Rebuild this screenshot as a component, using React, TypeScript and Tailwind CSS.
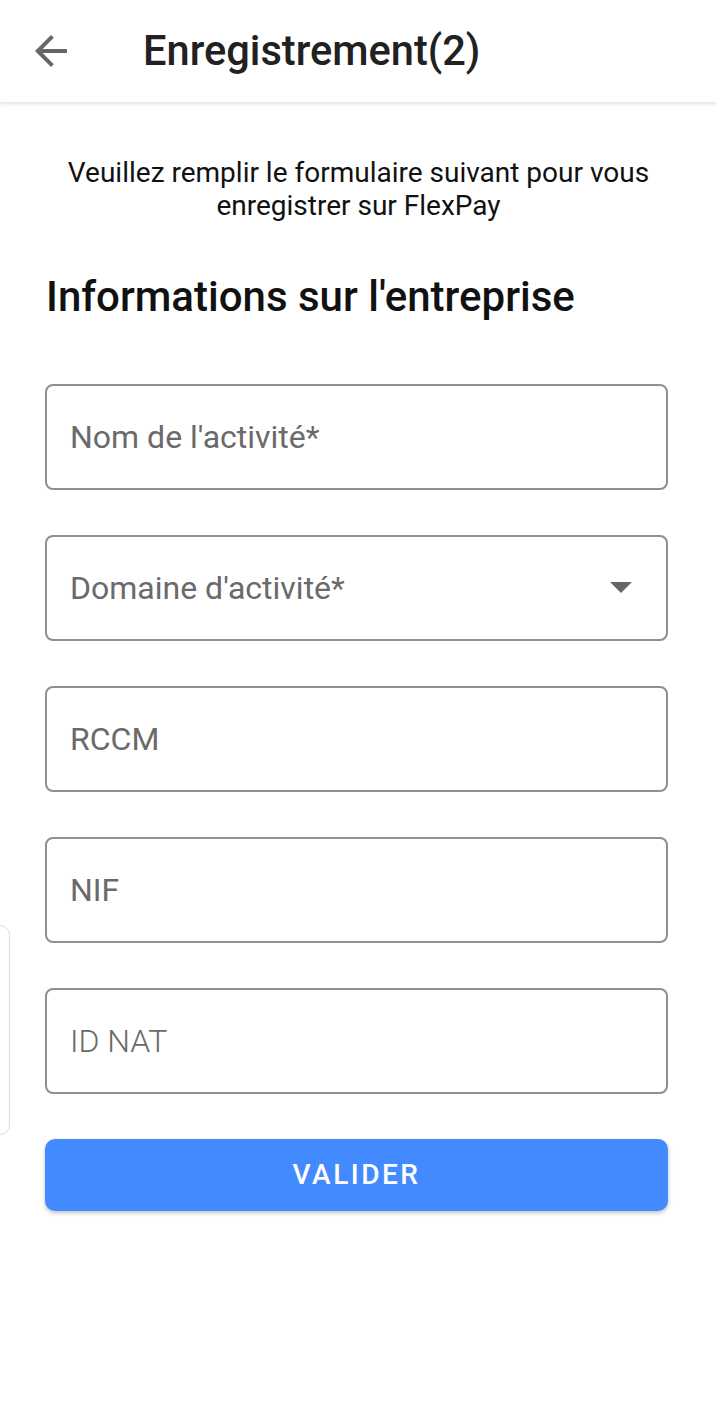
import React from "react";

const fields = [
  { label: "Nom de l'activité*", select: false },
  { label: "Domaine d'activité*", select: true },
  { label: "RCCM", select: false },
  { label: "NIF", select: false },
  { label: "ID NAT", select: false, light: true },
];

export default function App() {
  return (
    <div
      className="relative min-h-[1423px] w-full bg-white text-[#1f1f1f]"
      style={{ fontFamily: "Roboto, 'Noto Sans', sans-serif" }}
    >
      {/* Header */}
      <div className="flex h-[102px] items-center bg-white shadow-[0_2px_4px_rgba(0,0,0,0.12)]">
        <button className="ml-[27px] flex h-[48px] w-[48px] items-center justify-center text-[#666]">
          <svg width="48" height="48" viewBox="0 0 24 24" fill="currentColor">
            <path d="M20 11H7.83l5.59-5.59L12 4l-8 8 8 8 1.41-1.41L7.83 13H20v-2z" />
          </svg>
        </button>
        <h1 className="ml-[68px] text-[41.6px] font-medium text-[#212121]">Enregistrement(2)</h1>
      </div>

      {/* Intro */}
      <p className="mt-[54px] px-[30px] text-center text-[28px] leading-[33px] text-[#111]">
        Veuillez remplir le formulaire suivant pour vous
        <br />
        enregistrer sur FlexPay
      </p>

      <h2 className="mt-[50px] px-[46px] text-[42px] font-medium leading-[50px] text-[#111]">
        Informations sur l'entreprise
      </h2>

      {/* Form */}
      <div className="mt-[62px] flex flex-col gap-[45px] pl-[45px] pr-[49px]">
        {fields.map((f) => (
          <div
            key={f.label}
            className="flex h-[106px] items-center justify-between rounded-[8px] border-2 border-[#8f8f8f] pl-[23px] pr-[34px]"
          >
            <span className={`text-[32px] text-[#6a6a6a] ${f.light ? "font-light" : ""}`}>{f.label}</span>
            {f.select && (
              <svg width="22" height="12" viewBox="0 0 22 12" fill="#666">
                <path d="M0 0h22L11 11z" />
              </svg>
            )}
          </div>
        ))}

        <button className="h-[72px] w-full rounded-[10px] bg-[#448aff] text-[28px] font-medium tracking-[2.5px] text-white shadow-[0_2px_4px_rgba(0,0,0,0.25)]">
          VALIDER
        </button>
      </div>

      {/* Partial floating panel on left edge */}
      <div className="absolute left-[-20px] top-[925px] h-[210px] w-[30px] rounded-[10px] border border-[#dcdcdc] bg-white" />
    </div>
  );
}
